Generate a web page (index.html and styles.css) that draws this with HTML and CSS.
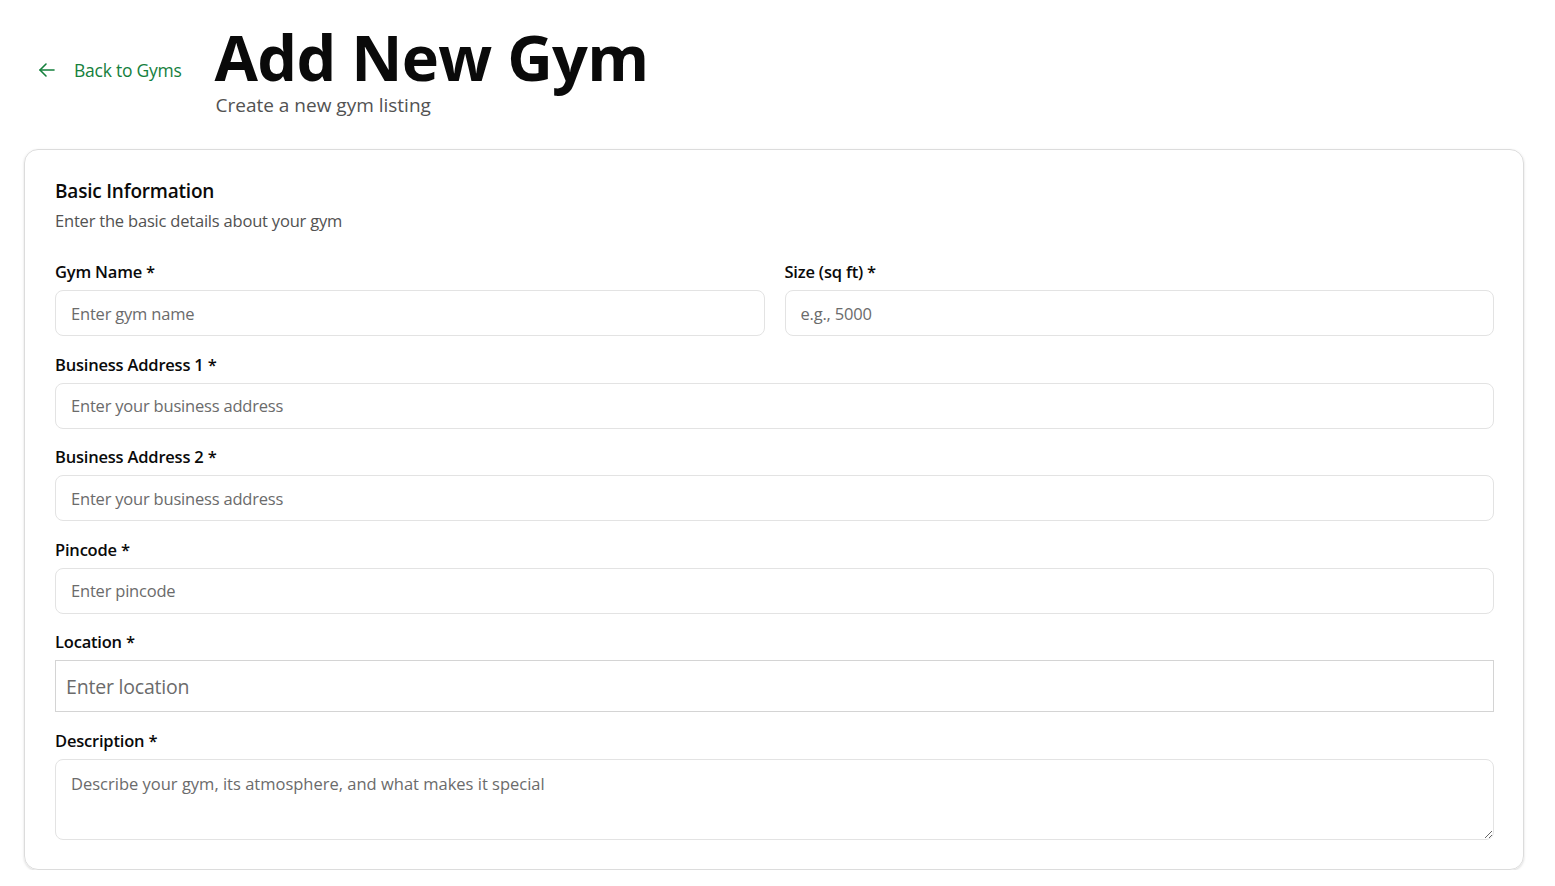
FILE: index.html
```html
<!DOCTYPE html>
<html lang="en">
<head>
<meta charset="utf-8">
<title>Add New Gym</title>
<link rel="stylesheet" href="styles.css">
</head>
<body>
<div class="page">
  <header class="header">
    <a class="back" href="#">
      <svg class="back-icon" viewBox="0 0 24 24" width="24" height="24" fill="none" stroke="currentColor" stroke-width="1.6" stroke-linecap="round" stroke-linejoin="round"><path d="M19 12H5"/><path d="M11 18l-6-6 6-6"/></svg>
      <span>Back to Gyms</span>
    </a>
    <div class="heading">
      <h1 class="title">Add New Gym</h1>
      <p class="subtitle">Create a new gym listing</p>
    </div>
  </header>

  <section class="card">
    <h2 class="card-title">Basic Information</h2>
    <p class="card-desc">Enter the basic details about your gym</p>

    <form class="form">
      <div class="row two">
        <div class="field">
          <label class="label">Gym Name *</label>
          <input class="input" placeholder="Enter gym name">
        </div>
        <div class="field">
          <label class="label">Size (sq ft) *</label>
          <input class="input" placeholder="e.g., 5000">
        </div>
      </div>
      <div class="field">
        <label class="label">Business Address 1 *</label>
        <input class="input" placeholder="Enter your business address">
      </div>
      <div class="field">
        <label class="label">Business Address 2 *</label>
        <input class="input" placeholder="Enter your business address">
      </div>
      <div class="field">
        <label class="label">Pincode *</label>
        <input class="input" placeholder="Enter pincode">
      </div>
      <div class="field">
        <label class="label">Location *</label>
        <input class="input plain" placeholder="Enter location">
      </div>
      <div class="field">
        <label class="label">Description *</label>
        <textarea class="input textarea" placeholder="Describe your gym, its atmosphere, and what makes it special"></textarea>
      </div>
    </form>
  </section>
</div>
</body>
</html>
```

FILE: styles.css
```css
* { box-sizing: border-box; }
html, body { margin: 0; padding: 0; background: #ffffff; }
body {
  font-family: "Open Sans", "Noto Sans", sans-serif;
  color: #0a0a0a;
}
.page {
  padding: 24px 31px 0 24px;
}
.header {
  display: flex;
  align-items: flex-start;
  gap: 17px;
  height: 101px;
  margin-bottom: 24px;
}
.back {
  display: flex;
  align-items: center;
  gap: 15px;
  padding: 0 16px 0 11px;
  margin-top: 34px;
  height: 24px;
  color: #15803d;
  text-decoration: none;
  font-size: 17.5px;
  letter-spacing: -0.25px;
}
.back-icon { flex: none; }
.heading { display: flex; flex-direction: column; }
.title {
  margin: 0;
  font-size: 63px;
  line-height: 66px;
  font-weight: 700;
  letter-spacing: -0.7px;
  color: #0a0a0a;
}
.subtitle {
  margin: 2px 0 0 1px;
  font-size: 19px;
  line-height: 26px;
  color: #525252;
  letter-spacing: 0;
}
.card {
  border: 1px solid #dcdcdc;
  border-radius: 14px;
  box-shadow: 0 1px 3px rgba(0,0,0,0.10), 0 1px 2px rgba(0,0,0,0.06);
  padding: 27px 29px 29px 30px;
}
.card-title {
  margin: 0;
  font-size: 19px;
  line-height: 28px;
  font-weight: 600;
  letter-spacing: -0.2px;
}
.card-desc {
  margin: 4px 0 0 0;
  font-size: 16.5px;
  line-height: 24px;
  color: #525252;
  letter-spacing: -0.2px;
}
.form {
  margin-top: 27px;
  display: flex;
  flex-direction: column;
  gap: 16.5px;
}
.row.two {
  display: grid;
  grid-template-columns: 1fr 1fr;
  gap: 20px;
}
.field { display: flex; flex-direction: column; gap: 6px; }
.label {
  font-size: 16.5px;
  line-height: 24px;
  font-weight: 600;
  letter-spacing: -0.2px;
  color: #0a0a0a;
}
.input {
  height: 46px;
  border: 1px solid #e3e3e3;
  border-radius: 8px;
  padding: 0 15px;
  font-family: inherit;
  font-size: 16.5px;
  letter-spacing: -0.2px;
  color: #0a0a0a;
  background: #fff;
  outline: none;
}
.input::placeholder { color: #6b6b6b; }
.input.plain {
  height: 52px;
  border-radius: 0;
  border-color: #d4d4d4;
  padding: 0 10px;
  font-size: 19.5px;
}
.textarea {
  height: 81px;
  padding: 12px 15px;
  line-height: 24px;
  letter-spacing: 0;
  resize: vertical;
}
```
